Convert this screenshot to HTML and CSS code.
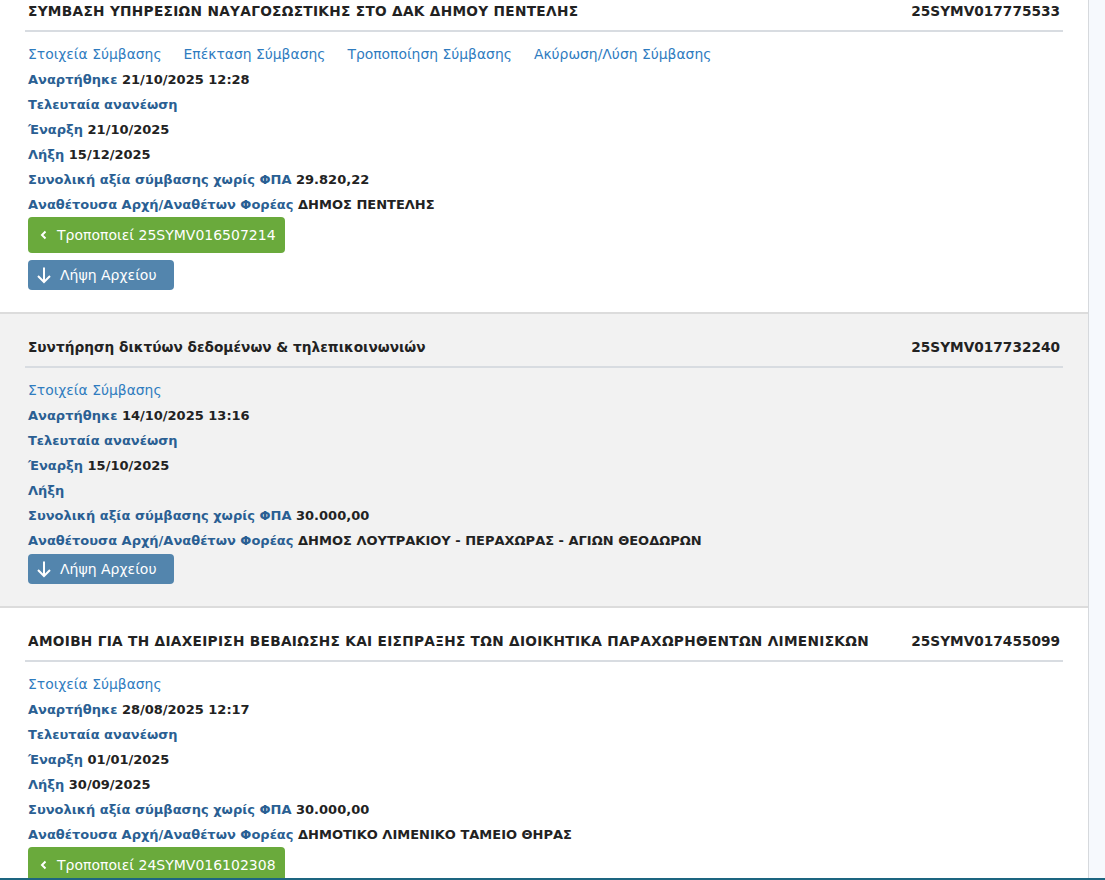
FILE: index.html
```html
<!DOCTYPE html>
<html lang="el">
<head>
<meta charset="utf-8">
<title>Συμβάσεις</title>
<link rel="stylesheet" href="styles.css">
</head>
<body>
<div class="page">
  <main class="main">
    <div class="list">
      <section class="item">
        <div class="head">
          <div class="title caps">ΣΥΜΒΑΣΗ ΥΠΗΡΕΣΙΩΝ ΝΑΥΑΓΟΣΩΣΤΙΚΗΣ ΣΤΟ ΔΑΚ ΔΗΜΟΥ ΠΕΝΤΕΛΗΣ</div>
          <div class="ada">25SYMV017775533</div>
        </div>
        <div class="body">
          <div class="links">
            <a href="#">Στοιχεία Σύμβασης</a>
            <a href="#">Επέκταση Σύμβασης</a>
            <a href="#">Τροποποίηση Σύμβασης</a>
            <a href="#">Ακύρωση/Λύση Σύμβασης</a>
          </div>
          <div class="field"><span class="lbl">Αναρτήθηκε</span> 21/10/2025 12:28</div>
          <div class="field"><span class="lbl">Τελευταία ανανέωση</span></div>
          <div class="field"><span class="lbl">Έναρξη</span> 21/10/2025</div>
          <div class="field"><span class="lbl">Λήξη</span> 15/12/2025</div>
          <div class="field"><span class="lbl">Συνολική αξία σύμβασης χωρίς ΦΠΑ</span> 29.820,22</div>
          <div class="field"><span class="lbl">Αναθέτουσα Αρχή/Αναθέτων Φορέας</span> ΔΗΜΟΣ ΠΕΝΤΕΛΗΣ</div>
          <a class="btn btn-green" href="#"><svg class="chev" viewBox="0 0 8 10" width="8" height="10"><path d="M5.5 1.5 L2 5 L5.5 8.5" fill="none" stroke="#fff" stroke-width="2"/></svg>Τροποποιεί 25SYMV016507214</a>
          <a class="btn btn-blue" href="#"><svg class="arrow" viewBox="0 0 16 18" width="16" height="18"><path d="M8 1.5 V16 M2 10 L8 16 L14 10" fill="none" stroke="#fff" stroke-width="2"/></svg>Λήψη Αρχείου</a>
        </div>
      </section>

      <section class="item alt">
        <div class="head">
          <div class="title">Συντήρηση δικτύων δεδομένων &amp; τηλεπικοινωνιών</div>
          <div class="ada">25SYMV017732240</div>
        </div>
        <div class="body">
          <div class="links">
            <a href="#">Στοιχεία Σύμβασης</a>
          </div>
          <div class="field"><span class="lbl">Αναρτήθηκε</span> 14/10/2025 13:16</div>
          <div class="field"><span class="lbl">Τελευταία ανανέωση</span></div>
          <div class="field"><span class="lbl">Έναρξη</span> 15/10/2025</div>
          <div class="field"><span class="lbl">Λήξη</span></div>
          <div class="field"><span class="lbl">Συνολική αξία σύμβασης χωρίς ΦΠΑ</span> 30.000,00</div>
          <div class="field"><span class="lbl">Αναθέτουσα Αρχή/Αναθέτων Φορέας</span> ΔΗΜΟΣ ΛΟΥΤΡΑΚΙΟΥ - ΠΕΡΑΧΩΡΑΣ - ΑΓΙΩΝ ΘΕΟΔΩΡΩΝ</div>
          <a class="btn btn-blue first" href="#"><svg class="arrow" viewBox="0 0 16 18" width="16" height="18"><path d="M8 1.5 V16 M2 10 L8 16 L14 10" fill="none" stroke="#fff" stroke-width="2"/></svg>Λήψη Αρχείου</a>
        </div>
      </section>

      <section class="item">
        <div class="head">
          <div class="title caps">ΑΜΟΙΒΗ ΓΙΑ ΤΗ ΔΙΑΧΕΙΡΙΣΗ ΒΕΒΑΙΩΣΗΣ ΚΑΙ ΕΙΣΠΡΑΞΗΣ ΤΩΝ ΔΙΟΙΚΗΤΙΚΑ ΠΑΡΑΧΩΡΗΘΕΝΤΩΝ ΛΙΜΕΝΙΣΚΩΝ</div>
          <div class="ada">25SYMV017455099</div>
        </div>
        <div class="body">
          <div class="links">
            <a href="#">Στοιχεία Σύμβασης</a>
          </div>
          <div class="field"><span class="lbl">Αναρτήθηκε</span> 28/08/2025 12:17</div>
          <div class="field"><span class="lbl">Τελευταία ανανέωση</span></div>
          <div class="field"><span class="lbl">Έναρξη</span> 01/01/2025</div>
          <div class="field"><span class="lbl">Λήξη</span> 30/09/2025</div>
          <div class="field"><span class="lbl">Συνολική αξία σύμβασης χωρίς ΦΠΑ</span> 30.000,00</div>
          <div class="field"><span class="lbl">Αναθέτουσα Αρχή/Αναθέτων Φορέας</span> ΔΗΜΟΤΙΚΟ ΛΙΜΕΝΙΚΟ ΤΑΜΕΙΟ ΘΗΡΑΣ</div>
          <a class="btn btn-green" href="#"><svg class="chev" viewBox="0 0 8 10" width="8" height="10"><path d="M5.5 1.5 L2 5 L5.5 8.5" fill="none" stroke="#fff" stroke-width="2"/></svg>Τροποποιεί 24SYMV016102308</a>
          <a class="btn btn-blue" href="#"><svg class="arrow" viewBox="0 0 16 18" width="16" height="18"><path d="M8 1.5 V16 M2 10 L8 16 L14 10" fill="none" stroke="#fff" stroke-width="2"/></svg>Λήψη Αρχείου</a>
        </div>
      </section>
    </div>
  </main>
  <aside class="side"></aside>
</div>
<div class="footer-bar"></div>
</body>
</html>
```

FILE: styles.css
```css
html, body {
  margin: 0;
  padding: 0;
  height: 100%;
  overflow: hidden;
}
body {
  background: #f6f9fd;
  font-family: "DejaVu Sans", Verdana, sans-serif;
  color: #222;
}
.page {
  display: flex;
  height: 100%;
}
.main {
  width: 1088px;
  flex: none;
  background: #fff;
  border-right: 1px solid #d6d9dd;
  overflow: hidden;
}
.side {
  flex: 1;
  background: #f6f9fd;
}
.list {
  margin-top: -22px;
}
.item {
  padding: 23px 25px 22px 25px;
  border-bottom: 2px solid #dcdcdc;
  background: #fff;
}
.item.alt {
  background: #f2f2f2;
}
.head {
  display: flex;
  align-items: flex-start;
  padding: 0 3px 9px 3px;
  border-bottom: 2px solid #d8dce1;
  font-size: 13.7px;
  font-weight: bold;
  line-height: 20px;
  color: #222;
}
.title {
  flex: 1;
  min-width: 0;
  height: 20px;
  overflow: hidden;
}
.title.caps {
  letter-spacing: 0.3px;
}
.ada {
  flex: none;
  margin-left: 15px;
}
.body {
  padding: 10px 3px 0 3px;
}
.links {
  display: flex;
  gap: 22px;
  font-size: 13.9px;
  line-height: 25px;
}
.links a {
  color: #2f7cbf;
  text-decoration: none;
}
.field {
  font-size: 13px;
  font-weight: bold;
  line-height: 25px;
  color: #222;
}
.lbl {
  color: #2a5f93;
}
.btn {
  display: flex;
  align-items: center;
  width: fit-content;
  color: #fff;
  text-decoration: none;
  font-size: 14px;
  border-radius: 4px;
}
.btn-green {
  background: #6aaa3c;
  height: 36px;
  padding: 0 9px 0 12px;
  margin-top: 0;
}
.btn-green .chev {
  margin-right: 9px;
}
.btn-blue {
  background: #5385ad;
  height: 30px;
  padding: 0 17px 0 8px;
  margin-top: 7px;
}
.btn-blue.first {
  margin-top: 1px;
}
.btn-blue .arrow {
  margin-right: 8px;
}
.footer-bar {
  position: fixed;
  left: 0;
  right: 0;
  bottom: 0;
  height: 2px;
  background: #1d6580;
}
```
